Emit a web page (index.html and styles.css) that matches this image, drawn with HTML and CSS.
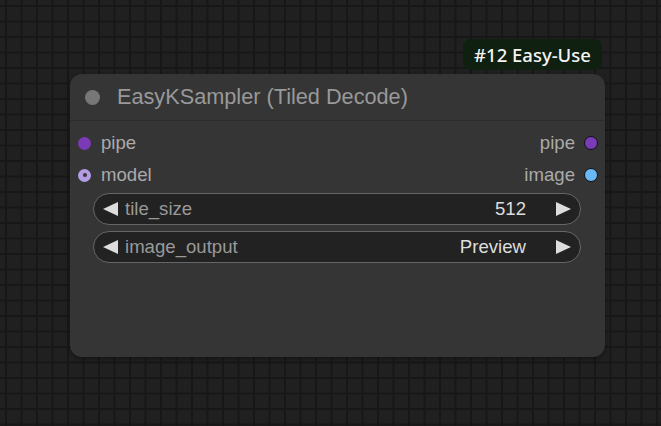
FILE: index.html
```html
<!DOCTYPE html>
<html lang="en">
<head>
  <meta charset="UTF-8">
  <meta name="viewport" content="width=device-width, initial-scale=1.0">
  <title>EasyKSampler (Tiled Decode)</title>
  <link rel="stylesheet" href="styles.css">
</head>
<body>
  <div class="canvas">
    <div class="badge">#12 Easy-Use</div>

    <div class="node">
      <div class="node-title">
        <span class="title-dot"></span>
        <span class="title-text">EasyKSampler (Tiled Decode)</span>
      </div>

      <div class="slots">
        <div class="slot-row">
          <div class="slot slot-in">
            <span class="dot dot-pipe"></span>
            <span>pipe</span>
          </div>
          <div class="slot slot-out">
            <span>pipe</span>
            <span class="dot dot-pipe dot-ring"></span>
          </div>
        </div>
        <div class="slot-row">
          <div class="slot slot-in">
            <span class="dot dot-model"></span>
            <span>model</span>
          </div>
          <div class="slot slot-out">
            <span>image</span>
            <span class="dot dot-image dot-ring"></span>
          </div>
        </div>
      </div>

      <div class="widgets">
        <div class="widget">
          <span class="arrow arrow-left"></span>
          <span class="widget-label">tile_size</span>
          <span class="widget-value">512</span>
          <span class="arrow arrow-right"></span>
        </div>
        <div class="widget">
          <span class="arrow arrow-left"></span>
          <span class="widget-label">image_output</span>
          <span class="widget-value">Preview</span>
          <span class="arrow arrow-right"></span>
        </div>
      </div>
    </div>
  </div>
</body>
</html>
```

FILE: styles.css
```css
html, body {
  margin: 0;
  padding: 0;
  width: 100%;
  height: 100%;
  overflow: hidden;
}
body {
  font-family: "Liberation Sans", Arial, sans-serif;
  background-color: #202020;
}
.canvas {
  position: relative;
  width: 661px;
  height: 426px;
  background-color: #202020;
  background-image:
    linear-gradient(to right, #171717 0, #171717 2px, transparent 2px),
    linear-gradient(to bottom, #171717 0, #171717 2px, transparent 2px);
  background-size: 15.5px 15.5px;
  background-position: 5px 5px;
}
.badge {
  position: absolute;
  left: 463px;
  top: 39px;
  width: 139px;
  height: 31px;
  box-sizing: border-box;
  background: #0f1f10;
  border-radius: 8px;
  color: #f4f4f4;
  font-family: "Noto Sans", sans-serif;
  font-size: 18.5px;
  font-weight: 500;
  display: flex;
  align-items: center;
  justify-content: center;
}
.node {
  position: absolute;
  left: 70px;
  top: 74px;
  width: 535px;
  height: 283px;
  background: #353535;
  border-radius: 12px;
  box-shadow: 0 2px 4px rgba(0, 0, 0, 0.35);
}
.node-title {
  height: 47px;
  box-sizing: border-box;
  border-bottom: 1px solid #2c2c2c;
  display: flex;
  align-items: center;
  padding-left: 15px;
  gap: 17px;
}
.title-dot {
  width: 15px;
  height: 15px;
  border-radius: 50%;
  background: #777;
}
.title-text {
  color: #999;
  font-size: 21.7px;
}
.slots {
  padding-top: 6px;
}
.slot-row {
  height: 32px;
  display: flex;
  align-items: center;
  justify-content: space-between;
}
.slot {
  display: flex;
  align-items: center;
  color: #aaa;
  font-size: 18.6px;
}
.slot-in {
  padding-left: 8px;
  gap: 10px;
}
.slot-out {
  padding-right: 7px;
  gap: 9px;
}
.dot {
  width: 13px;
  height: 13px;
  border-radius: 50%;
  box-sizing: border-box;
}
.dot-ring {
  width: 14px;
  height: 14px;
  border: 1.5px solid #111;
}
.dot-pipe {
  background: #7b3ab6;
}
.dot-model {
  background: #b39ce4;
  border: 4px solid #b39ce4;
  position: relative;
}
.dot-model::after {
  content: "";
  position: absolute;
  left: 0.5px;
  top: 0.5px;
  width: 4px;
  height: 4px;
  border-radius: 50%;
  background: #353535;
}
.dot-image {
  background: #6bb8f6;
}
.widgets {
  padding: 2px 24px 0 23px;
  display: flex;
  flex-direction: column;
  gap: 6px;
}
.widget {
  height: 32px;
  box-sizing: border-box;
  border: 1.5px solid #666;
  border-radius: 16px;
  background: #222;
  display: flex;
  align-items: center;
  padding: 0 9px 0 9px;
  font-size: 18.6px;
}
.widget-label {
  color: #999;
  margin-left: 7px;
  flex: 1;
}
.widget-value {
  color: #ddd;
  margin-right: 30px;
}
.arrow {
  width: 0;
  height: 0;
  border-top: 7.5px solid transparent;
  border-bottom: 7.5px solid transparent;
}
.arrow-left {
  border-right: 15px solid #ddd;
}
.arrow-right {
  border-left: 15px solid #ddd;
}
```
